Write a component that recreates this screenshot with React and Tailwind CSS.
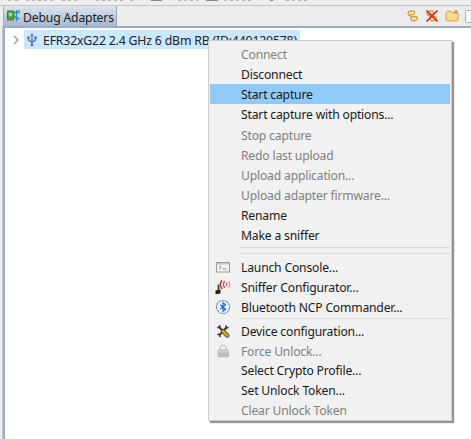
import React from "react";

const Svg = ({ children, className = "", w = 16, h = 16, vb = "0 0 16 16" }) => (
  <svg width={w} height={h} viewBox={vb} className={`shrink-0 ${className}`} fill="none">{children}</svg>
);

const Console = () => (
  <Svg>
    <rect x="1.5" y="3.5" width="13" height="9.5" fill="#f4f4f4" stroke="#9a9a9a" />
    <path d="M2 4h12v1.5H2z" fill="#c6c6c6" />
    <path d="M4 6.8l2.2 1.6L4 10M7.5 10h3.5" stroke="#8b8b8b" />
  </Svg>
);
const Sniffer = () => (
  <Svg w={18} vb="0 0 18 16">
    <path d="M4.5 5.5v7" stroke="#444" strokeWidth="1.8" />
    <path d="M1.5 11.5l5-1v4l-5 .7z" fill="#222" />
    <path d="M8.2 1.3C5.6 3.2 5.8 7.5 8.2 9.8" stroke="#a94541" strokeWidth="1.6" />
    <path d="M11 2C8.8 4 8.8 6.8 11 8.8" stroke="#b9534e" strokeWidth="1.4" />
    <path d="M12.3 3.6q1.4 1.7 0 3.6" stroke="#c0504d" strokeWidth="1.2" />
    <path d="M14.6 2.3q2.3 3 0 6.2" stroke="#d59692" strokeWidth="1.3" />
  </Svg>
);
const Bluetooth = () => (
  <Svg>
    <circle cx="8" cy="8" r="6.5" fill="#f3f8ff" stroke="#5c8ed0" strokeWidth="1.1" strokeDasharray="3 .6" />
    <path d="M5.2 5.8l5.4 4.5-2.6 2V3.7l2.6 2-5.4 4.5" stroke="#2868bd" strokeWidth="1.2" />
  </Svg>
);
const Tools = () => (
  <Svg>
    <path d="M3.5 3.5L8 8M12 4L4 12.5" stroke="#3a3a3a" strokeWidth="2" />
    <path d="M8 8.2l4.3 4.3" stroke="#3a3a3a" strokeWidth="4.4" strokeLinecap="round" />
    <path d="M8 8.2l4.3 4.3" stroke="#dca12a" strokeWidth="2.8" strokeLinecap="round" />
    <path d="M2.3 4.5h2.4V2M13.6 4.6L11.2 5 11 2.3M2.3 11.3l2.3.3.4 2.6" stroke="#3a3a3a" strokeWidth="1.5" />
  </Svg>
);
const Lock = () => (
  <Svg>
    <path d="M5 8V5.2C5 1.5 11 1.5 11 5.2V8" stroke="#cccccc" strokeWidth="1.7" />
    <rect x="2.5" y="6.5" width="11.5" height="7.7" rx=".7" fill="#bdbdbd" />
    <path d="M3 7.5h10.5v2H3z" fill="#d0d0d0" />
  </Svg>
);
const Adapter = () => (
  <Svg w={14} h={14} vb="0 0 14 14">
    <path d="M1.5 2h6.5v8H1.5z" fill="#54a64a" stroke="#3b7c35" />
    <path d="M3 4h3v3H3z" fill="#a7d88f" />
    <path d="M2 10v2M4.5 10v2M7 10v2" stroke="#8c651f" strokeWidth="1.3" />
    <path d="M10.5 1v11.5M8.5 3.5h4M8.5 8h2M10.5 9.5h3M13 1v3" stroke="#3482c8" strokeWidth="1.3" />
  </Svg>
);
const Usb = () => (
  <Svg w={12} h={14} vb="0 0 12 14">
    <path d="M6 2v10M2.5 4v3.2L6 9.5l3.5-2.3V4" stroke="#577bb0" strokeWidth="1.4" />
    <path d="M6 0l2 3H4zM1 3.5h3v2.6H1zM8 3.5h3v2.6H8z" fill="#6687b6" />
    <circle cx="6" cy="12" r="1.4" fill="#577bb0" />
  </Svg>
);
const Links = () => (
  <>
    <rect x="1" y="1.2" width="6.5" height="3.8" rx="1.6" transform="rotate(-14 4 3)" fill="#fae7a5" stroke="#c2973a" strokeWidth="1.1" />
    <rect x="4" y="6.8" width="6.5" height="3.8" rx="1.6" transform="rotate(-14 7 9)" fill="#fae7a5" stroke="#c2973a" strokeWidth="1.1" />
    <path d="M2 4.5l3 3.3" stroke="#c69a38" strokeWidth="1.2" />
  </>
);

const groups = [
  [
    { label: "Connect", disabled: true },
    { label: "Disconnect" },
    { label: "Start capture", active: true },
    { label: "Start capture with options..." },
    { label: "Stop capture", disabled: true },
    { label: "Redo last upload", disabled: true },
    { label: "Upload application...", disabled: true },
    { label: "Upload adapter firmware...", disabled: true },
    { label: "Rename" },
    { label: "Make a sniffer" },
  ],
  [
    { label: "Launch Console...", Icon: Console },
    { label: "Sniffer Configurator...", Icon: Sniffer },
    { label: "Bluetooth NCP Commander...", Icon: Bluetooth },
  ],
  [
    { label: "Device configuration...", Icon: Tools },
    { label: "Force Unlock...", disabled: true, Icon: Lock },
    { label: "Select Crypto Profile..." },
    { label: "Set Unlock Token..." },
    { label: "Clear Unlock Token", disabled: true },
  ],
];

const Item = ({ item, height }) => {
  const { label, disabled, active, Icon } = item;
  return (
    <div className={`flex shrink-0 items-center ${height} ${active ? "bg-[#91c9f7]" : ""} ${disabled ? "text-[#808080]" : "text-[#191919]"}`}>
      <div className="flex w-[31px] shrink-0 justify-center pr-[6px]">{Icon && <Icon />}</div>
      <span className="origin-left scale-x-[0.935] whitespace-nowrap tracking-[-0.2px]">{label}</span>
    </div>
  );
};

export default function App() {
  return (
    <div className="relative flex h-[439px] w-[471px] flex-col overflow-hidden bg-[#eeeeee] font-['Noto_Sans','Open_Sans',sans-serif] text-[13px] leading-[20px] text-[#222]">
      <div className="h-[6px] shrink-0 border-b border-[#c5c5c5]">
        <Svg w={471} h={2} vb="0 0 471 2">
          <path d="M8 .5h3M15 .5h3M26 .5h30M62 .5h18M96 .5h30M130 .5h6M178 .5h20M224 .5h28M286 .5h24" stroke="#b5b5b5" strokeDasharray="3 3" />
          <path d="M151 .5h11M206 .5h12M270 .5h3" stroke="#8a8a8a" />
        </Svg>
      </div>
      <div className="ml-[3px] flex h-[20px] shrink-0 border-l border-[#a7adb5] bg-[#ececec]">
        <div className="flex w-[113px] shrink-0 items-center gap-[3px] border-r border-[#9ba8b8] bg-linear-to-b from-[#dce4ee] to-[#a5b9d2] pl-[2px]">
          <Adapter />
          <span className="origin-left scale-x-[0.94] whitespace-nowrap pt-px tracking-[-0.2px]">Debug Adapters</span>
        </div>
        <div className="ml-auto flex w-[64px] shrink-0 items-center gap-[6px] overflow-hidden">
          <Svg w={12} h={12} vb="0 0 12 12"><Links /></Svg>
          <Svg w={14} h={14} vb="0 0 14 14"><g transform="translate(1 1)"><Links /></g><path d="M1.5 1.5l11 11M12.5 1.5l-11 11" stroke="#e0201a" strokeWidth="1.7" /></Svg>
          <Svg w={14} h={14} vb="0 0 14 14"><path d="M1 3.5l1-1.2h4l1 1.5h6v8H1z" fill="#f9dc91" stroke="#d4a24b" /><path d="M11 .8v4M9 2.8h4" stroke="#c38a27" /></Svg>
          <div className="h-[13px] w-[12px] shrink-0 rounded-[1px] border border-[#b6b6b6] bg-[#f8f8f8]" />
        </div>
      </div>
      <div className="ml-[2px] flex min-h-0 grow flex-col border-l border-[#c3c7cc]">
        <div className="flex min-h-0 grow flex-col border-l-2 border-t-2 border-[#9badc4] bg-white pt-[2px]">
          <div className="flex h-[19px] items-center">
            <Svg w={19} h={12} vb="0 0 19 12"><path d="M9 2l4 4-4 4" stroke="#969696" strokeWidth="1.2" /></Svg>
            <div className="flex h-[19px] w-[276px] items-center gap-[5px] bg-[#cce8ff] pl-[2px]">
              <Usb />
              <span className="origin-left scale-x-[0.946] whitespace-nowrap tracking-[-0.2px]">EFR32xG22 2.4 GHz 6 dBm RB (ID:440120578)</span>
            </div>
          </div>
        </div>
      </div>
      <div className="absolute left-[208px] top-[40px] flex h-[381px] w-[244px] flex-col border border-[#cccccc] bg-[#f1f1f1] px-[1px] pt-[3px] shadow-[2px_2px_1px_#949494]">
        {groups[0].map((x) => <Item key={x.label} item={x} height="h-[20.15px]" />)}
        <div className="my-[2px] ml-[29px] h-[7px] shrink-0 border-y border-[#d8d8d8]" />
        {groups[1].map((x) => <Item key={x.label} item={x} height="h-[20.2px]" />)}
        <div className="mb-[2px] mt-[1px] ml-[29px] h-px shrink-0 bg-[#d8d8d8]" />
        {groups[2].map((x) => <Item key={x.label} item={x} height="h-[19.75px]" />)}
      </div>
    </div>
  );
}
